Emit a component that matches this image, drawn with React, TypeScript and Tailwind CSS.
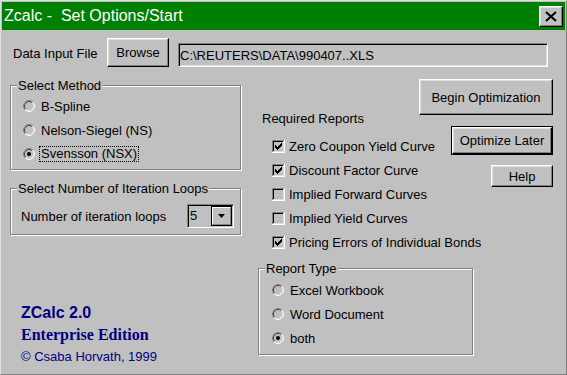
import type { ReactNode } from "react";

type ButtonProps = {
  children: ReactNode;
  className?: string;
  isDefault?: boolean;
};

function RaisedButton({ children, className = "", isDefault = false }: ButtonProps) {
  return (
    <button
      type="button"
      className={`${className} ${isDefault ? "border border-black" : ""} flex shrink-0 bg-[#c0c0c0] p-0 text-[13px] text-black`}
    >
      <span className="flex h-full w-full items-center justify-center border border-t-white border-l-white border-r-black border-b-black shadow-[inset_-1px_-1px_0_#808080,inset_1px_1px_0_#dfdfdf]">
        {children}
      </span>
    </button>
  );
}

function Radio({ checked = false }: { checked?: boolean }) {
  return (
    <svg width="12" height="12" viewBox="0 0 12 12" className="shrink-0">
      <circle cx="6" cy="6" r="5" fill="#c0c0c0" />
      <path d="M2.11 9.89 A5.5 5.5 0 0 1 9.89 2.11" fill="none" stroke="#808080" />
      <path d="M9.89 2.11 A5.5 5.5 0 0 1 2.11 9.89" fill="none" stroke="#ffffff" />
      <path d="M2.82 9.18 A4.5 4.5 0 0 1 9.18 2.82" fill="none" stroke="#404040" />
      <path d="M9.18 2.82 A4.5 4.5 0 0 1 2.82 9.18" fill="none" stroke="#dfdfdf" />
      {checked && <circle cx="6" cy="6" r="2" fill="#000" />}
    </svg>
  );
}

const checkTops = [5, 6, 7, 6, 5, 4, 3];

function Checkbox({ checked = false }: { checked?: boolean }) {
  return (
    <svg width="13" height="13" viewBox="0 0 13 13" className="shrink-0" shapeRendering="crispEdges">
      <rect x="0" y="0" width="13" height="13" fill="#c0c0c0" />
      <path d="M0.5 12 V0.5 H12" fill="none" stroke="#808080" />
      <path d="M0 12.5 H12.5 V0" fill="none" stroke="#ffffff" />
      <path d="M1.5 11 V1.5 H11" fill="none" stroke="#000000" />
      <path d="M1 11.5 H11.5 V1" fill="none" stroke="#dfdfdf" />
      {checked &&
        checkTops.map((top, i) => (
          <rect key={i} x={3 + i} y={top} width="1" height="3" fill="#000" />
        ))}
    </svg>
  );
}

function RadioRow({ label, checked, focused }: { label: string; checked?: boolean; focused?: boolean }) {
  return (
    <div className="flex h-[24px] items-center">
      <Radio checked={checked} />
      {focused ? (
        <span className="ml-[4px] border border-dotted border-black px-[1px] leading-[14px]">{label}</span>
      ) : (
        <span className="ml-[6px]">{label}</span>
      )}
    </div>
  );
}

function CheckRow({ label, checked }: { label: string; checked?: boolean }) {
  return (
    <div className="flex h-[24px] items-center">
      <Checkbox checked={checked} />
      <span className="ml-[4px] whitespace-nowrap">{label}</span>
    </div>
  );
}

const reports = [
  { label: "Zero Coupon Yield Curve", checked: true },
  { label: "Discount Factor Curve", checked: true },
  { label: "Implied Forward Curves", checked: false },
  { label: "Implied Yield Curves", checked: false },
  { label: "Pricing Errors of Individual Bonds", checked: true }
];

const groupClass =
  "m-0 border border-[#808080] p-0 shadow-[inset_1px_1px_0_#fff,1px_1px_0_#fff]";
const legendClass = "ml-[6px] bg-[#c0c0c0] px-[1px] leading-[15px]";

export default function App() {
  return (
    <div className="h-[375px] w-[567px] overflow-hidden border border-t-[#dfdfdf] border-l-[#dfdfdf] border-r-[#808080] border-b-[#808080] bg-[#c0c0c0] p-[1px] text-[13px] leading-[15px] text-black [font-family:'Liberation_Sans',Arial,sans-serif]">
      {/* title bar */}
      <div className="flex h-[28px] items-center justify-between bg-[#008000] pl-[2px] pr-[2px]">
        <span className="whitespace-pre text-[16px] leading-[18px] text-white">Zcalc -  Set Options/Start</span>
        <RaisedButton className="h-[21px] w-[24px]">
          <svg width="12" height="11" viewBox="0 0 12 11">
            <path d="M1 1 L11 10 M11 1 L1 10" stroke="#000" strokeWidth="2" />
          </svg>
        </RaisedButton>
      </div>

      {/* data input row */}
      <div className="mt-[8px] flex h-[29px] items-start pl-[11px]">
        <span className="mt-[8px] w-[94px]">Data Input File</span>
        <RaisedButton className="h-[29px] w-[62px]">Browse</RaisedButton>
        <div className="ml-[9px] mt-[5px] flex h-[24px] w-[370px] items-center border border-t-[#808080] border-l-[#808080] border-r-white border-b-white pl-[1px] shadow-[inset_1px_1px_0_#000,inset_-1px_-1px_0_#dfdfdf]">
          {"C:\\REUTERS\\DATA\\990407..XLS"}
        </div>
      </div>

      <div className="flex">
        {/* left column */}
        <div className="ml-[8px] flex w-[231px] flex-col">
          <fieldset className={`${groupClass} mt-[11px] h-[92px]`}>
            <legend className={legendClass}>Select Method</legend>
            <div className="pl-[12px] pt-[1px]">
              <RadioRow label="B-Spline" />
              <RadioRow label="Nelson-Siegel (NS)" />
              <RadioRow label="Svensson (NSX)" checked focused />
            </div>
          </fieldset>

          <fieldset className={`${groupClass} mt-[11px] h-[54px]`}>
            <legend className={legendClass}>Select Number of Iteration Loops</legend>
            <div className="flex items-center pl-[10px] pt-[8px]">
              <span className="w-[166px]">Number of iteration loops</span>
              <div className="flex h-[24px] w-[47px] border border-t-[#808080] border-l-[#808080] border-r-white border-b-white shadow-[inset_1px_1px_0_#000]">
                <span className="flex-1 pl-[2px] pt-[3px]">5</span>
                <div className="mr-[1px] mt-[1px] flex h-[20px] w-[21px] border border-black">
                  <span className="flex h-full w-full items-center justify-center border border-t-white border-l-white border-r-[#808080] border-b-[#808080]">
                    <svg width="7" height="4" viewBox="0 0 7 4">
                      <polygon points="0,0 7,0 3.5,4" fill="#000" />
                    </svg>
                  </span>
                </div>
              </div>
            </div>
          </fieldset>

          <div className="mt-[67px] pl-[11px] text-[#000080]">
            <div className="text-[16px] font-bold leading-[22px]">ZCalc 2.0</div>
            <div className="text-[16px] font-bold leading-[22px] [font-family:'Liberation_Serif','Times_New_Roman',serif]">
              Enterprise Edition
            </div>
            <div className="leading-[22px]">© Csaba Horvath, 1999</div>
          </div>
        </div>

        {/* right column */}
        <div className="ml-[17px] flex w-[295px] flex-col">
          <div className="mt-[12px] flex justify-end">
            <RaisedButton className="h-[36px] w-[134px]">Begin Optimization</RaisedButton>
          </div>

          <div className="grid">
            <div className="col-start-1 row-start-1">
              <div className="-mt-[4px] pl-[4px]">Required Reports</div>
              <div className="mt-[8px] pl-[14px]">
                {reports.map((r) => (
                  <CheckRow key={r.label} label={r.label} checked={r.checked} />
                ))}
              </div>
            </div>
            <div className="col-start-1 row-start-1 flex flex-col items-end">
              <RaisedButton className="mt-[11px] h-[29px] w-[102px]" isDefault>
                Optimize Later
              </RaisedButton>
              <RaisedButton className="mt-[10px] h-[22px] w-[62px]">Help</RaisedButton>
            </div>
          </div>

          <fieldset className={`${groupClass} mt-[7px] h-[94px] w-[215px]`}>
            <legend className={legendClass}>Report Type</legend>
            <div className="pl-[13px] pt-[2px]">
              <RadioRow label="Excel Workbook" />
              <RadioRow label="Word Document" />
              <RadioRow label="both" checked />
            </div>
          </fieldset>
        </div>
      </div>
    </div>
  );
}
